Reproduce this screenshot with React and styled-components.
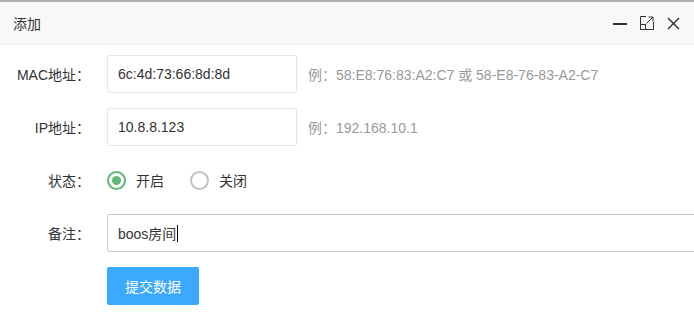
import React from "react";
import styled, { createGlobalStyle } from "styled-components";

const GlobalStyle = createGlobalStyle`
  html, body {
    margin: 0;
    padding: 0;
    background: #fff;
    font-family: "Liberation Sans", "Noto Sans CJK SC", sans-serif;
    overflow: hidden;
  }
`;

// layer window
const Layer = styled.div`
  width: 694px;
  height: 315px;
  border-top: 2px solid #b2b2b2;
  box-sizing: border-box;
  background: #fff;
`;

const Title = styled.div`
  height: 42px;
  background-color: #f8f8f8;
  border-bottom: 1px solid #eee;
  display: flex;
  align-items: center;
  padding: 0 14px 0 13px;
  font-size: 14px;
  color: #333;
`;

const TitleText = styled.span`
  flex: 1;
`;

const Tools = styled.div`
  display: flex;
  align-items: center;
  gap: 13px;
`;

const ToolIcon = styled.svg`
  display: block;
  cursor: pointer;
`;

// form
const Form = styled.div`
  padding-top: 10px;
`;

const Row = styled.div`
  display: flex;
  align-items: center;
  height: 38px;
  margin-bottom: 15px;
`;

const Label = styled.label`
  width: 90px;
  margin-right: 17px;
  text-align: right;
  font-size: 14px;
  color: #333;
  flex-shrink: 0;
`;

const Input = styled.input`
  box-sizing: border-box;
  width: 190px;
  height: 38px;
  border: 1px solid #e6e6e6;
  border-radius: 2px;
  padding: 0 10px;
  font-family: inherit;
  font-size: 14px;
  color: #333;
  outline: none;
  flex-shrink: 0;
`;

const FakeInput = styled.div`
  box-sizing: border-box;
  width: 620px;
  height: 38px;
  border: 1px solid #c9c9c9;
  border-radius: 2px;
  padding: 0 10px;
  font-size: 14px;
  color: #333;
  display: flex;
  align-items: center;
  flex-shrink: 0;
`;

const Caret = styled.span`
  display: inline-block;
  width: 1px;
  height: 17px;
  background: #000;
  margin-left: 1px;
`;

const Hint = styled.span`
  margin-left: 11px;
  font-size: 14px;
  color: #999;
  white-space: nowrap;
`;

const Radio = styled.div`
  display: flex;
  align-items: center;
  margin-right: 26px;
  cursor: pointer;
`;

const RadioCircle = styled.span`
  box-sizing: border-box;
  width: 19px;
  height: 19px;
  border-radius: 50%;
  border: 2px solid ${(p) => (p.$on ? "#5fb878" : "#c2c2c2")};
  display: flex;
  align-items: center;
  justify-content: center;
  margin-right: 10px;
  &::after {
    content: "";
    width: 9px;
    height: 9px;
    border-radius: 50%;
    background: #5fb878;
    display: ${(p) => (p.$on ? "block" : "none")};
  }
`;

const RadioText = styled.span`
  font-size: 14px;
  color: #333;
`;

const Button = styled.button`
  margin-left: 107px;
  width: 92px;
  height: 38px;
  border: none;
  border-radius: 2px;
  background-color: #3ba9fd;
  color: #fff;
  font-family: inherit;
  font-size: 14px;
  cursor: pointer;
`;

export default function App() {
  return (
    <>
      <GlobalStyle />
      <Layer>
        <Title>
          <TitleText>添加</TitleText>
          <Tools>
            <ToolIcon width="14" height="14" viewBox="0 0 14 14">
              <line x1="0" y1="8" x2="14" y2="8" stroke="#2f2f3a" strokeWidth="2" />
            </ToolIcon>
            <ToolIcon width="14" height="14" viewBox="0 0 14 14" fill="none" stroke="#33333d" strokeWidth="1">
              <path d="M6 0.5H0.5V8" />
              <path d="M13.5 6V13.5H6" />
              <rect x="0.5" y="8.5" width="5" height="5" />
              <path d="M6.5 7.5L13 1" />
              <path d="M8.5 1H13V5.5" />
            </ToolIcon>
            <ToolIcon width="13" height="13" viewBox="0 0 13 13" stroke="#33333d" strokeWidth="1.5">
              <line x1="1" y1="1" x2="12" y2="12" />
              <line x1="12" y1="1" x2="1" y2="12" />
            </ToolIcon>
          </Tools>
        </Title>

        <Form>
          <Row>
            <Label>MAC地址：</Label>
            <Input defaultValue="6c:4d:73:66:8d:8d" />
            <Hint>例：58:E8:76:83:A2:C7 或 58-E8-76-83-A2-C7</Hint>
          </Row>
          <Row>
            <Label>IP地址：</Label>
            <Input defaultValue="10.8.8.123" />
            <Hint>例：192.168.10.1</Hint>
          </Row>
          <Row>
            <Label>状态：</Label>
            <Radio>
              <RadioCircle $on />
              <RadioText>开启</RadioText>
            </Radio>
            <Radio>
              <RadioCircle />
              <RadioText>关闭</RadioText>
            </Radio>
          </Row>
          <Row>
            <Label>备注：</Label>
            <FakeInput>
              boos房间
              <Caret />
            </FakeInput>
          </Row>
          <Button>提交数据</Button>
        </Form>
      </Layer>
    </>
  );
}
